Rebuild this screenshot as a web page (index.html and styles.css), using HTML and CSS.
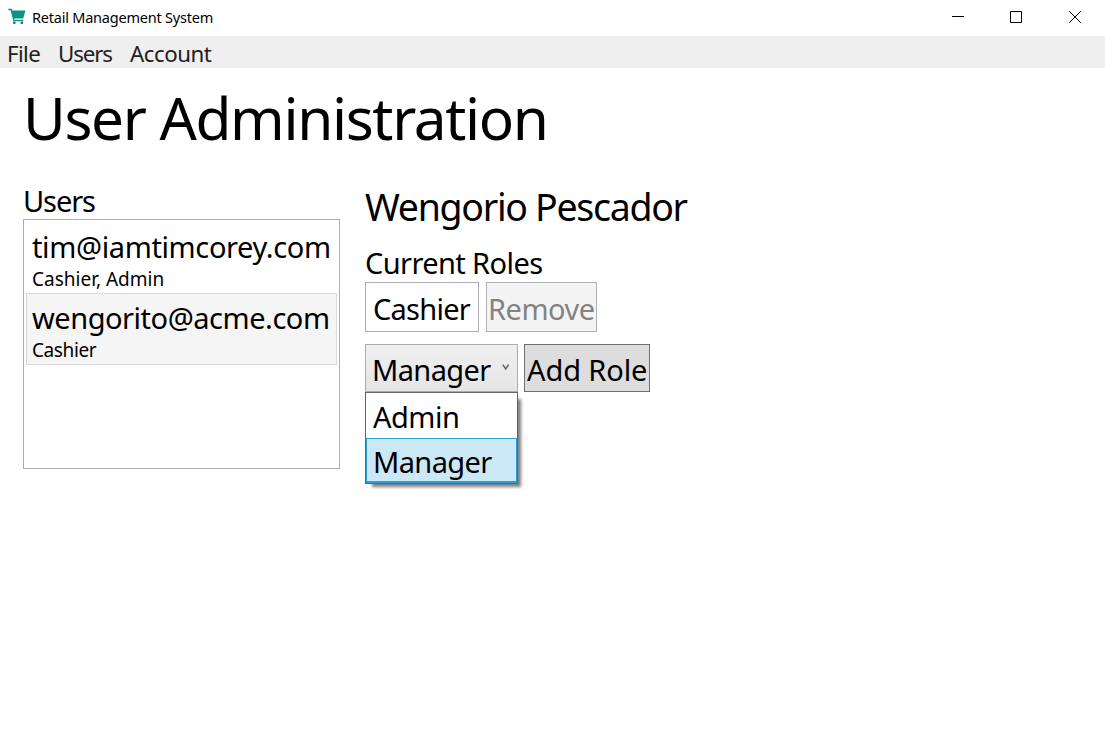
FILE: index.html
```html
<!DOCTYPE html>
<html lang="en">
<head>
<meta charset="utf-8">
<title>Retail Management System</title>
<link rel="stylesheet" href="styles.css">
</head>
<body>
<header class="titlebar">
  <svg class="cart" width="18" height="17" viewBox="0 0 18 17">
    <path d="M.3 1.6H3.2L6 12.6H15.2" fill="none" stroke="#0c9384" stroke-width="1.5"/>
    <path d="M3.3 2.4H17.5L15.2 10.6H5.4Z" fill="#0c9384"/>
    <circle cx="6.3" cy="14.8" r="1.4" fill="#46616a"/>
    <circle cx="13.8" cy="14.8" r="1.4" fill="#46616a"/>
  </svg>
  <span class="app-name">Retail Management System</span>
  <div class="controls">
    <svg width="12" height="12" viewBox="0 0 12 12"><path d="M0 5.5H12"/></svg>
    <svg width="12" height="12" viewBox="0 0 12 12"><path d="M.5 .5H11.5V11.5H.5Z"/></svg>
    <svg width="12" height="12" viewBox="0 0 12 12"><path d="M.2 .2L11.8 11.8M11.8 .2L.2 11.8"/></svg>
  </div>
</header>
<nav class="menubar">
  <span class="m-file">File</span><span class="m-users">Users</span><span class="m-account">Account</span>
</nav>
<main class="content">
  <h1 class="heading">User Administration</h1>
  <div class="columns">
    <section class="users">
      <div class="label l-users">Users</div>
      <div class="list">
        <div class="item">
          <div class="email e-tim">tim@iamtimcorey.com</div>
          <div class="roles r-two">Cashier, Admin</div>
        </div>
        <div class="item selected">
          <div class="email e-wen">wengorito@acme.com</div>
          <div class="roles r-one">Cashier</div>
        </div>
      </div>
    </section>
    <section class="detail">
      <h2 class="name">Wengorio Pescador</h2>
      <div class="label l-roles">Current Roles</div>
      <div class="row current">
        <div class="role-box">Cashier</div>
        <button class="btn remove" disabled>Remove</button>
      </div>
      <div class="row add">
        <div class="combo">
          <span class="t-manager">Manager</span>
          <svg class="chevron" width="8" height="8" viewBox="0 0 8 8"><path d="M.8 .6L3.7 5L6.6 .6" fill="none" stroke="#606060" stroke-width="1.5"/></svg>
          <div class="dropdown">
            <div class="option t-admin">Admin</div>
            <div class="option active t-manager">Manager</div>
          </div>
        </div>
        <button class="btn add-role">Add Role</button>
      </div>
    </section>
  </div>
</main>
</body>
</html>
```
FILE: styles.css
```css
* { box-sizing: border-box; }
body {
  margin: 0;
  height: 739px;
  overflow: hidden;
  background: #fff;
  color: #000;
  font-family: "Noto Sans", "Open Sans", sans-serif;
  white-space: nowrap;
}
.titlebar { display: flex; height: 36px; padding-left: 8px; }
.cart { margin-top: 8px; }
.app-name { margin-left: 6px; font-size: 14.5px; line-height: 35px; letter-spacing: -0.22px; }
.controls { display: flex; gap: 47px; margin: 11px 24px 0 auto; }
.controls svg { fill: none; stroke: #000; stroke-width: 1; }
.controls svg:first-child { margin-right: -1px; }
.menubar {
  display: flex;
  height: 32px;
  padding-left: 7px;
  background: #efefef;
  color: #212121;
  font-size: 22.3px;
  line-height: 36px;
}
.m-file { width: 51px; letter-spacing: -0.6px; }
.m-users { width: 72px; letter-spacing: -1.1px; }
.m-account { letter-spacing: -0.5px; }
.content { padding: 8px 23px 0; }
.heading { margin: 0; height: 104px; font-size: 58.5px; font-weight: 400; line-height: 82px; letter-spacing: -1.35px; }
.columns { display: flex; gap: 25px; }
.users { width: 317px; }
.label { font-size: 29px; line-height: 42px; }
.l-users { height: 39px; letter-spacing: -1.1px; }
.l-roles { height: 40px; letter-spacing: -0.6px; }
.list { height: 250px; padding: 2px; border: 1px solid #abadb3; }
.item { height: 71px; padding: 3px 5px 0; border: 1px solid transparent; }
.selected { height: 72px; background: #f5f5f5; border-color: #dadada; }
.email { height: 39px; font-size: 29px; line-height: 41px; }
.e-tim { letter-spacing: -0.37px; }
.e-wen { letter-spacing: -0.47px; }
.roles { font-size: 19px; line-height: 29px; }
.r-two { letter-spacing: 0; }
.r-one { letter-spacing: -0.4px; }
.name { margin: 0; height: 62px; font-size: 37.5px; font-weight: 400; line-height: 53px; letter-spacing: -1.3px; }
.row { display: flex; font-size: 29px; }
.current { gap: 7px; height: 50px; margin-bottom: 12px; }
.role-box { width: 114px; padding-left: 7px; border: 1px solid #abadb3; line-height: 51px; letter-spacing: -0.75px; }
.btn { padding: 0; color: inherit; font: inherit; text-align: left; }
.remove { width: 111px; padding: 2px 0 0 1px; border: 1px solid #adb2b5; background: #f4f4f4; color: #838383; line-height: 48px; letter-spacing: -0.5px; }
.add { gap: 6px; height: 48px; }
.combo {
  position: relative;
  display: flex;
  width: 153px;
  padding-left: 6px;
  border: 1px solid #acacac;
  background: linear-gradient(#f0f0f0, #e5e5e5);
  line-height: 49px;
}
.t-manager { letter-spacing: -0.6px; }
.t-admin { letter-spacing: -0.5px; }
.chevron { margin: 19px 7px 0 auto; }
.dropdown {
  position: absolute;
  top: 47px;
  left: -1px;
  width: 153px;
  height: 92px;
  border: 1px solid #646464;
  background: #fff;
  box-shadow: 5px 5px 3px -2px rgba(0, 0, 0, .5);
}
.option { height: 45px; padding-left: 7px; line-height: 48px; }
.active { padding-left: 6px; border: 1px solid #26a0da; border-bottom-width: 2px; background: #cbe8f6; line-height: 46px; }
.add-role { width: 126px; padding: 2px 0 0 2px; border: 1px solid #707070; background: #ddd; line-height: 46px; letter-spacing: -0.1px; }
```
